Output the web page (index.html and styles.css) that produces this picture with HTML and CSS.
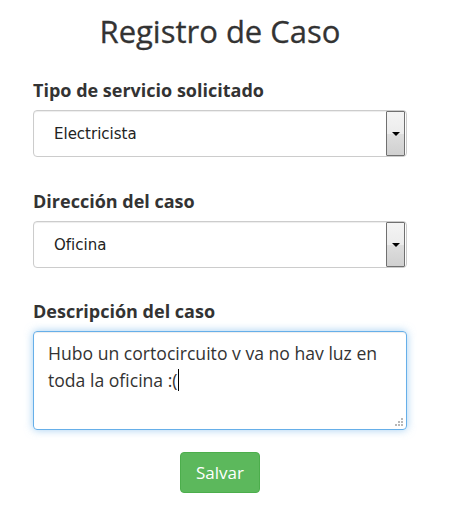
FILE: index.html
```html
<!DOCTYPE html>
<html lang="es">
<head>
<meta charset="utf-8">
<title>Registro de Caso</title>
<link rel="stylesheet" href="styles.css">
</head>
<body>
<main class="page">
  <h1 class="title">Registro de Caso</h1>
  <form class="form">
    <div class="field">
      <label class="label">Tipo de servicio solicitado</label>
      <div class="select">
        <span class="select-text">Electricista</span>
        <span class="select-btn"><span class="arrow"></span></span>
      </div>
    </div>
    <div class="field">
      <label class="label">Dirección del caso</label>
      <div class="select">
        <span class="select-text">Oficina</span>
        <span class="select-btn"><span class="arrow"></span></span>
      </div>
    </div>
    <div class="field field-last">
      <label class="label">Descripción del caso</label>
      <div class="textarea">
        <p class="ta-text">Hubo un cortocircuito v va no hav luz en toda la oficina :(<span class="caret"></span></p>
        <svg class="grip" width="9" height="9" viewBox="0 0 9 9">
          <rect x="6" y="0" width="2" height="2" fill="#b8b8b8"/>
          <rect x="3" y="3" width="2" height="2" fill="#b8b8b8"/>
          <rect x="6" y="3" width="2" height="2" fill="#b8b8b8"/>
          <rect x="0" y="6" width="2" height="2" fill="#b8b8b8"/>
          <rect x="3" y="6" width="2" height="2" fill="#b8b8b8"/>
          <rect x="6" y="6" width="2" height="2" fill="#b8b8b8"/>
        </svg>
      </div>
    </div>
    <div class="actions">
      <button type="button" class="btn">Salvar</button>
    </div>
  </form>
</main>
</body>
</html>
```
FILE: styles.css
```css
html, body {
  margin: 0;
  padding: 0;
  background: #ffffff;
}
body {
  font-family: "Open Sans", "Liberation Sans", sans-serif;
  color: #333333;
}
.page {
  width: 374px;
  margin-left: 33px;
  padding-top: 10px;
}
.title {
  margin: 0;
  font-size: 31px;
  font-weight: 400;
  line-height: 42px;
  text-align: center;
  color: #333333;
  -webkit-text-stroke: 0.3px #333333;
}
.form {
  display: flex;
  flex-direction: column;
  margin-top: 26px;
}
.field {
  display: flex;
  flex-direction: column;
  margin-bottom: 32px;
}
.field-last {
  margin-top: -1px;
}
.label {
  font-size: 18px;
  font-weight: 700;
  line-height: 24px;
  margin-bottom: 8px;
  color: #333333;
}
.select {
  display: flex;
  align-items: stretch;
  height: 45px;
  border: 1px solid #cccccc;
  border-radius: 4px;
  box-shadow: inset 0 1px 1px rgba(0,0,0,0.075);
  padding-right: 1px;
}
.select-text {
  flex: 1;
  display: flex;
  align-items: center;
  padding-left: 20px;
  font-family: "DejaVu Sans", Verdana, sans-serif;
  font-size: 15px;
  color: #222222;
}
.select-btn {
  width: 17px;
  border: 1px solid #707070;
  border-radius: 1px;
  background: linear-gradient(#f4f4f4 0%, #ececec 50%, #dedede 51%, #d0d0d0 100%);
  display: flex;
  align-items: center;
  justify-content: center;
}
.arrow {
  width: 0;
  height: 0;
  border-left: 4px solid transparent;
  border-right: 4px solid transparent;
  border-top: 4px solid #000000;
}
.textarea {
  position: relative;
  box-sizing: content-box;
  height: 81px;
  border: 1px solid #66afe9;
  border-radius: 4px;
  box-shadow: inset 0 1px 1px rgba(0,0,0,0.075), 0 0 8px rgba(102,175,233,0.6);
  padding: 8px 14px;
}
.ta-text {
  margin: 0;
  font-size: 17.6px;
  line-height: 27px;
  color: #333333;
}
.caret {
  display: inline-block;
  width: 1px;
  height: 22px;
  background: #000000;
  vertical-align: -4px;
}
.grip {
  position: absolute;
  right: 2px;
  bottom: 2px;
}
.actions {
  display: flex;
  justify-content: center;
  margin-top: -10px;
}
.btn {
  width: 80px;
  height: 41px;
  border: 1px solid #4cae4c;
  border-radius: 4px;
  background: #5cb85c;
  color: #ffffff;
  font-family: "Open Sans", "Liberation Sans", sans-serif;
  font-size: 17px;
  padding: 0;
}
```
